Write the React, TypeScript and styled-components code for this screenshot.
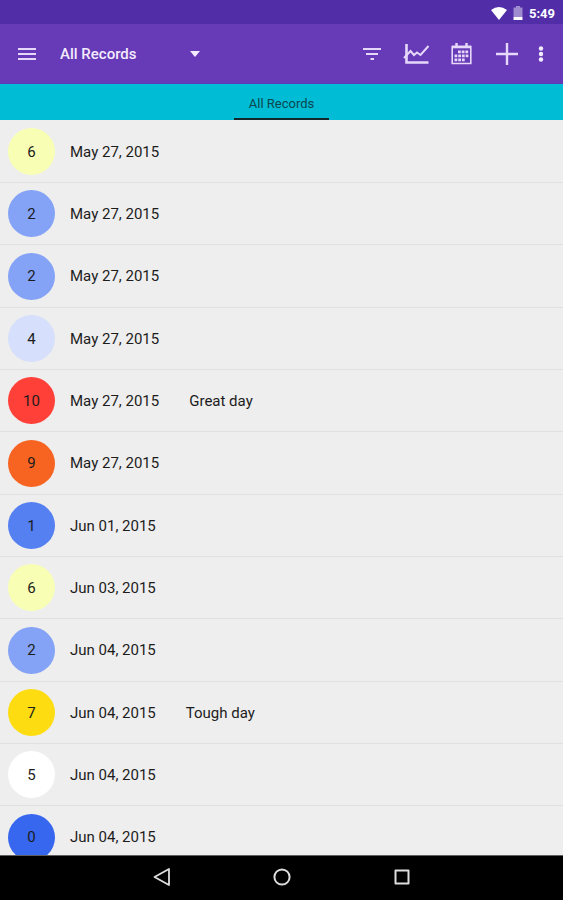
import React, { useState } from "react";
import styled, { createGlobalStyle } from "styled-components";

const GlobalStyle = createGlobalStyle`
  *, *::before, *::after { box-sizing: border-box; }
  body {
    margin: 0;
    font-family: Roboto, "Noto Sans", sans-serif;
    background: #eeeeee;
  }
  button, select { font: inherit; color: inherit; border: 0; background: none; padding: 0; margin: 0; }
  svg { display: block; }
`;

const Screen = styled.div`
  display: flex;
  flex-direction: column;
  height: 100vh;
  overflow: hidden;
`;

const StatusBar = styled.div`
  display: flex;
  flex: none;
  align-items: center;
  justify-content: flex-end;
  gap: 6px;
  height: 24px;
  padding: 2px 8px 0 0;
  background: #512da8;
  color: #ffffff;
  font-size: 13px;
  font-weight: 700;
`;

const Toolbar = styled.header`
  display: flex;
  flex: none;
  align-items: center;
  height: 60px;
  padding-right: 10px;
  background: #673ab7;
  border-bottom: 1px solid #5a3cbc;
  color: #e6d8fa;
`;

const IconButton = styled.button<{ $width: number }>`
  display: flex;
  flex: none;
  align-items: center;
  justify-content: center;
  width: ${(p) => p.$width}px;
  height: 42px;
  cursor: pointer;
`;

const Spinner = styled.label`
  display: grid;
  align-items: center;
  width: 140px;
  margin-left: 6px;
  color: #f3ebff;
  & > * { grid-area: 1 / 1; }
  & > svg { justify-self: end; pointer-events: none; }
`;

const SpinnerSelect = styled.select`
  appearance: none;
  width: 100%;
  height: 40px;
  font-size: 15px;
  font-weight: 500;
  option { color: #222222; }
`;

const Actions = styled.div`
  display: flex;
  margin-left: auto;
`;

const Tabs = styled.nav`
  display: flex;
  flex: none;
  justify-content: center;
  height: 36px;
  background: #00bcd4;
`;

const Tab = styled.button`
  padding: 4px 15px 0;
  border-bottom: 2px solid #10282c;
  color: #0c4750;
  font-size: 13px;
`;

const RecordList = styled.ul`
  flex: 1;
  min-height: 0;
  margin: 0;
  padding: 1px 0 0;
  overflow: hidden;
  list-style: none;
  background: #eeeeee;
`;

const RecordRow = styled.li`
  display: flex;
  align-items: center;
  height: 62px;
  padding: 0 8px;
  border-bottom: 1px solid #e1e1e1;
  color: #1c1c1c;
  font-size: 15px;
  &:nth-child(3n) { height: 63px; }
`;

const Score = styled.span<{ $color: string }>`
  display: flex;
  flex: none;
  align-items: center;
  justify-content: center;
  width: 47px;
  height: 47px;
  margin-right: 15px;
  border-radius: 50%;
  background: ${(p) => p.$color};
`;

const Note = styled.span`
  margin-left: 30px;
`;

const SystemBar = styled.footer`
  display: flex;
  flex: none;
  justify-content: center;
  height: 45px;
  background: #000000;
  border-top: 1px solid #5e5e5e;
  color: #dddddd;
`;

const scoreColors: Record<number, string> = {
  0: "#3767ee",
  1: "#5580f2",
  2: "#85a3f6",
  4: "#d6dffb",
  5: "#ffffff",
  6: "#f8ffb4",
  7: "#fddd11",
  9: "#f76422",
  10: "#ff4038",
};

const records: { score: number; date: string; note?: string }[] = [
  { score: 6, date: "May 27, 2015" },
  { score: 2, date: "May 27, 2015" },
  { score: 2, date: "May 27, 2015" },
  { score: 4, date: "May 27, 2015" },
  { score: 10, date: "May 27, 2015", note: "Great day" },
  { score: 9, date: "May 27, 2015" },
  { score: 1, date: "Jun 01, 2015" },
  { score: 6, date: "Jun 03, 2015" },
  { score: 2, date: "Jun 04, 2015" },
  { score: 7, date: "Jun 04, 2015", note: "Tough day" },
  { score: 5, date: "Jun 04, 2015" },
  { score: 0, date: "Jun 04, 2015" },
];

const WifiIcon = () => (
  <svg width="16" height="13" viewBox="0 0 16 13" fill="currentColor" aria-hidden="true">
    <path d="M0 3 Q8 -3 16 3 L8 13 Z" />
  </svg>
);

const BatteryIcon = () => (
  <svg width="10" height="14" viewBox="0 0 10 14" fill="currentColor" aria-hidden="true">
    <path d="M3 0h4v1.500h2.500V11H.5V1.500H3z" opacity=".45" />
    <path d="M.5 11h9v3h-9z" />
  </svg>
);

const MenuIcon = () => (
  <svg width="18" height="14" viewBox="0 0 18 14" fill="currentColor" aria-hidden="true">
    <path d="M0 1h18v2H0zM0 6h18v2H0zM0 11h18v2H0z" />
  </svg>
);

const CaretIcon = () => (
  <svg width="10" height="6" viewBox="0 0 10 6" fill="currentColor" aria-hidden="true">
    <path d="M0 0h10L5 6z" />
  </svg>
);

const FilterIcon = () => (
  <svg width="18" height="14" viewBox="0 0 18 14" fill="currentColor" aria-hidden="true">
    <path d="M0 1h18v2H0zM3 6h12v2H3zM7.500 11h3.500v2H7.500z" />
  </svg>
);

const ChartIcon = () => (
  <svg width="28" height="22" viewBox="0 0 28 22" fill="none" stroke="currentColor" aria-hidden="true">
    <path d="M3.500 1v18.500h22" strokeWidth="2.600" />
    <path d="M1 15l6.500-7 3.500 4 3-2.500 3.500 2.500L25.500 3" strokeWidth="2" />
  </svg>
);

const CalendarIcon = () => (
  <svg width="21" height="22" viewBox="0 0 21 22" fill="none" stroke="currentColor" aria-hidden="true">
    <path d="M1.200 3.500h18.600v17H1.200z" strokeWidth="1.600" />
    <path d="M1 4h19" strokeWidth="2.600" />
    <path d="M5.500 0v5M15.500 0v5" strokeWidth="2.400" />
    <path d="M7 8.800h11M3.500 12.800h14.500M3.500 16.800h11" strokeWidth="2.800" strokeDasharray="2.800 .9" />
  </svg>
);

const PlusIcon = () => (
  <svg width="22" height="22" viewBox="0 0 22 22" stroke="currentColor" strokeWidth="2.400" aria-hidden="true">
    <path d="M11 0v22M0 11h22" />
  </svg>
);

const MoreIcon = () => (
  <svg width="6" height="18" viewBox="0 0 6 18" fill="#f3ebff" aria-hidden="true">
    <circle cx="3" cy="3.500" r="2.200" />
    <circle cx="3" cy="9" r="2.200" />
    <circle cx="3" cy="14.500" r="2.200" />
  </svg>
);

const BackIcon = () => (
  <svg width="18" height="20" viewBox="0 0 18 20" fill="none" stroke="currentColor" strokeWidth="1.800" strokeLinejoin="round" aria-hidden="true">
    <path d="M16 2v16L1.500 10z" />
  </svg>
);

const HomeIcon = () => (
  <svg width="18" height="18" viewBox="0 0 18 18" fill="none" stroke="currentColor" strokeWidth="2" aria-hidden="true">
    <circle cx="9" cy="9" r="7.600" />
  </svg>
);

const RecentIcon = () => (
  <svg width="16" height="16" viewBox="0 0 16 16" fill="none" stroke="currentColor" strokeWidth="2" strokeLinejoin="round" aria-hidden="true">
    <path d="M1.500 1.500h13v13h-13z" />
  </svg>
);

export default function App() {
  const [filter, setFilter] = useState("All Records");
  return (
    <Screen>
      <GlobalStyle />
      <StatusBar>
        <WifiIcon />
        <BatteryIcon />
        <time>5:49</time>
      </StatusBar>
      <Toolbar>
        <IconButton $width={54} aria-label="Menu"><MenuIcon /></IconButton>
        <Spinner>
          <SpinnerSelect aria-label="Record set" value={filter} onChange={(e) => setFilter(e.target.value)}>
            <option>All Records</option>
          </SpinnerSelect>
          <CaretIcon />
        </Spinner>
        <Actions>
          <IconButton $width={45} aria-label="Filter"><FilterIcon /></IconButton>
          <IconButton $width={45} aria-label="Chart"><ChartIcon /></IconButton>
          <IconButton $width={45} aria-label="Calendar"><CalendarIcon /></IconButton>
          <IconButton $width={45} aria-label="Add record"><PlusIcon /></IconButton>
          <IconButton $width={24} aria-label="More options"><MoreIcon /></IconButton>
        </Actions>
      </Toolbar>
      <Tabs>
        <Tab aria-current="page">All Records</Tab>
      </Tabs>
      <RecordList>
        {records.map((record, index) => (
          <RecordRow key={index}>
            <Score $color={scoreColors[record.score]}>{record.score}</Score>
            <time>{record.date}</time>
            {record.note && <Note>{record.note}</Note>}
          </RecordRow>
        ))}
      </RecordList>
      <SystemBar>
        <IconButton $width={120} aria-label="Back"><BackIcon /></IconButton>
        <IconButton $width={120} aria-label="Home"><HomeIcon /></IconButton>
        <IconButton $width={120} aria-label="Recent apps"><RecentIcon /></IconButton>
      </SystemBar>
    </Screen>
  );
}
